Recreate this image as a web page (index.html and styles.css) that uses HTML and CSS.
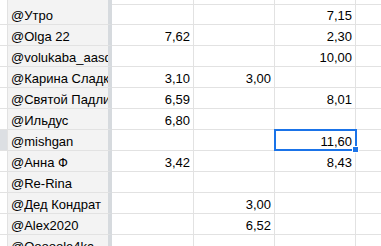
FILE: index.html
```html
<!DOCTYPE html>
<html>
<head>
<meta charset="utf-8">
<link rel="stylesheet" href="styles.css">
</head>
<body>
<div class="sheet">
  <div class="row top"><div class="c h"></div><div class="c a"></div><div class="c n"></div><div class="c n"></div><div class="c n"></div><div class="c e"></div></div>
  <div class="row"><div class="c h"></div><div class="c a">@Утро</div><div class="c n"></div><div class="c n"></div><div class="c n">7,15</div><div class="c e"></div></div>
  <div class="row"><div class="c h"></div><div class="c a">@Olga 22</div><div class="c n">7,62</div><div class="c n"></div><div class="c n">2,30</div><div class="c e"></div></div>
  <div class="row"><div class="c h"></div><div class="c a">@volukaba_aasd</div><div class="c n"></div><div class="c n"></div><div class="c n">10,00</div><div class="c e"></div></div>
  <div class="row"><div class="c h"></div><div class="c a">@Карина Сладкая</div><div class="c n">3,10</div><div class="c n">3,00</div><div class="c n"></div><div class="c e"></div></div>
  <div class="row"><div class="c h"></div><div class="c a">@Святой Падлик</div><div class="c n">6,59</div><div class="c n"></div><div class="c n">8,01</div><div class="c e"></div></div>
  <div class="row"><div class="c h"></div><div class="c a">@Ильдус</div><div class="c n">6,80</div><div class="c n"></div><div class="c n"></div><div class="c e"></div></div>
  <div class="row"><div class="c h sel"></div><div class="c a">@mishgan</div><div class="c n"></div><div class="c n"></div><div class="c n active">11,60<span class="cursor"><span class="handle"></span></span></div><div class="c e"></div></div>
  <div class="row"><div class="c h"></div><div class="c a">@Анна Ф</div><div class="c n">3,42</div><div class="c n"></div><div class="c n">8,43</div><div class="c e"></div></div>
  <div class="row"><div class="c h"></div><div class="c a">@Re-Rina</div><div class="c n"></div><div class="c n"></div><div class="c n"></div><div class="c e"></div></div>
  <div class="row"><div class="c h"></div><div class="c a">@Дед Кондрат</div><div class="c n"></div><div class="c n">3,00</div><div class="c n"></div><div class="c e"></div></div>
  <div class="row"><div class="c h"></div><div class="c a">@Alex2020</div><div class="c n"></div><div class="c n">6,52</div><div class="c n"></div><div class="c e"></div></div>
  <div class="row"><div class="c h"></div><div class="c a">@Ooooole4ka</div><div class="c n"></div><div class="c n"></div><div class="c n"></div><div class="c e"></div></div>
</div>
</body>
</html>
```
FILE: styles.css
```css
html, body {
  margin: 0;
  padding: 0;
  background: #fff;
  overflow: hidden;
}
.sheet {
  width: 381px;
  height: 246px;
  overflow: hidden;
  font-family: "Liberation Sans", Arial, sans-serif;
  font-size: 13px;
  color: #000;
}
.row {
  display: grid;
  grid-template-columns: 8px 104px 82px 81px 81px 1fr;
  height: 21px;
}
.row.top {
  height: 4px;
}
.c {
  box-sizing: border-box;
  border-right: 1px solid #e2e2e2;
  border-bottom: 1px solid #e2e2e2;
  padding: 4px 3px 0 3px;
  line-height: 15px;
  white-space: nowrap;
  overflow: hidden;
}
.c.h {
  padding: 0;
  background: #fff;
}
.c.h.sel {
  background: #dcdfe3;
}
.c.a {
  background: #f3f3f3;
  border-right: 4px solid #d6dade;
  padding-left: 3px;
}
.c.n {
  text-align: right;
}
.c.e {
  border-right: none;
}
.c.active {
  position: relative;
  overflow: visible;
}
.cursor {
  position: absolute;
  left: -1px;
  top: -1px;
  width: 83px;
  height: 22px;
  box-sizing: border-box;
  border: 2px solid #1a73e8;
}
.handle {
  position: absolute;
  right: -4px;
  bottom: -4px;
  width: 5px;
  height: 5px;
  background: #1a73e8;
  border: 1px solid #fff;
}
```
